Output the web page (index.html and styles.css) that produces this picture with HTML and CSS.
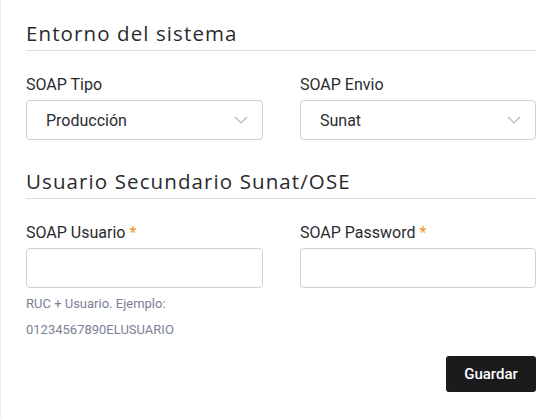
FILE: index.html
```html
<!DOCTYPE html>
<html lang="es">
<head>
<meta charset="utf-8">
<link rel="stylesheet" href="styles.css">
</head>
<body>
<div class="card">
  <h2 class="section-title">Entorno del sistema</h2>
  <div class="row">
    <div class="field">
      <label class="label">SOAP Tipo</label>
      <div class="select"><span>Producción</span>
        <svg class="chev" width="14" height="8" viewBox="0 0 14 8"><path d="M1 1l6 6 6-6" fill="none" stroke="#b5b8c0" stroke-width="1.2"/></svg>
      </div>
    </div>
    <div class="field">
      <label class="label">SOAP Envio</label>
      <div class="select"><span>Sunat</span>
        <svg class="chev" width="14" height="8" viewBox="0 0 14 8"><path d="M1 1l6 6 6-6" fill="none" stroke="#b5b8c0" stroke-width="1.2"/></svg>
      </div>
    </div>
  </div>
  <h2 class="section-title second">Usuario Secundario Sunat/OSE</h2>
  <div class="row">
    <div class="field">
      <label class="label">SOAP Usuario <span class="req">*</span></label>
      <div class="input"></div>
      <p class="help first">RUC + Usuario. Ejemplo:</p>
      <p class="help">01234567890ELUSUARIO</p>
    </div>
    <div class="field">
      <label class="label">SOAP Password <span class="req">*</span></label>
      <div class="input"></div>
    </div>
  </div>
  <div class="actions">
    <button class="btn">Guardar</button>
  </div>
</div>
</body>
</html>
```

FILE: styles.css
```css
html, body {
  margin: 0;
  padding: 0;
  background: #fff;
}
.card {
  width: 560px;
  height: 418px;
  box-sizing: border-box;
  border-left: 1px solid #ececf0;
  padding: 19px 24px 0 25px;
  font-family: Roboto, "Liberation Sans", sans-serif;
}
.section-title {
  margin: 0;
  font-family: "Open Sans", sans-serif;
  font-weight: 400;
  font-size: 20.5px;
  letter-spacing: 1.1px;
  line-height: 28px;
  color: #2a2a2e;
  padding-bottom: 3px;
  border-bottom: 1px solid #dedee4;
}
.section-title.second {
  margin-top: 27px;
}
.row {
  display: grid;
  grid-template-columns: 237px 236px;
  column-gap: 37px;
  margin-top: 24px;
}
.label {
  display: block;
  font-size: 16px;
  line-height: 19px;
  color: #2b2b2f;
  margin-bottom: 6px;
}
.req {
  color: #f7931e;
}
.select, .input {
  box-sizing: border-box;
  height: 40px;
  border: 1px solid #cfd0d4;
  border-radius: 4px;
  background: #fff;
}
.select {
  display: flex;
  align-items: center;
  justify-content: space-between;
  padding: 0 14px 0 19px;
  font-size: 16px;
  color: #2b2b2f;
}
.help {
  margin: 0;
  font-size: 13px;
  line-height: 26px;
  color: #7a8196;
}
.help.first {
  margin-top: 3px;
}
.actions {
  display: flex;
  justify-content: flex-end;
  margin-top: 13px;
}
.btn {
  width: 90px;
  height: 36px;
  border: 0;
  border-radius: 3px;
  background: #1b1b1d;
  color: #fff;
  font-family: Roboto, sans-serif;
  font-weight: 500;
  font-size: 15px;
}
```
